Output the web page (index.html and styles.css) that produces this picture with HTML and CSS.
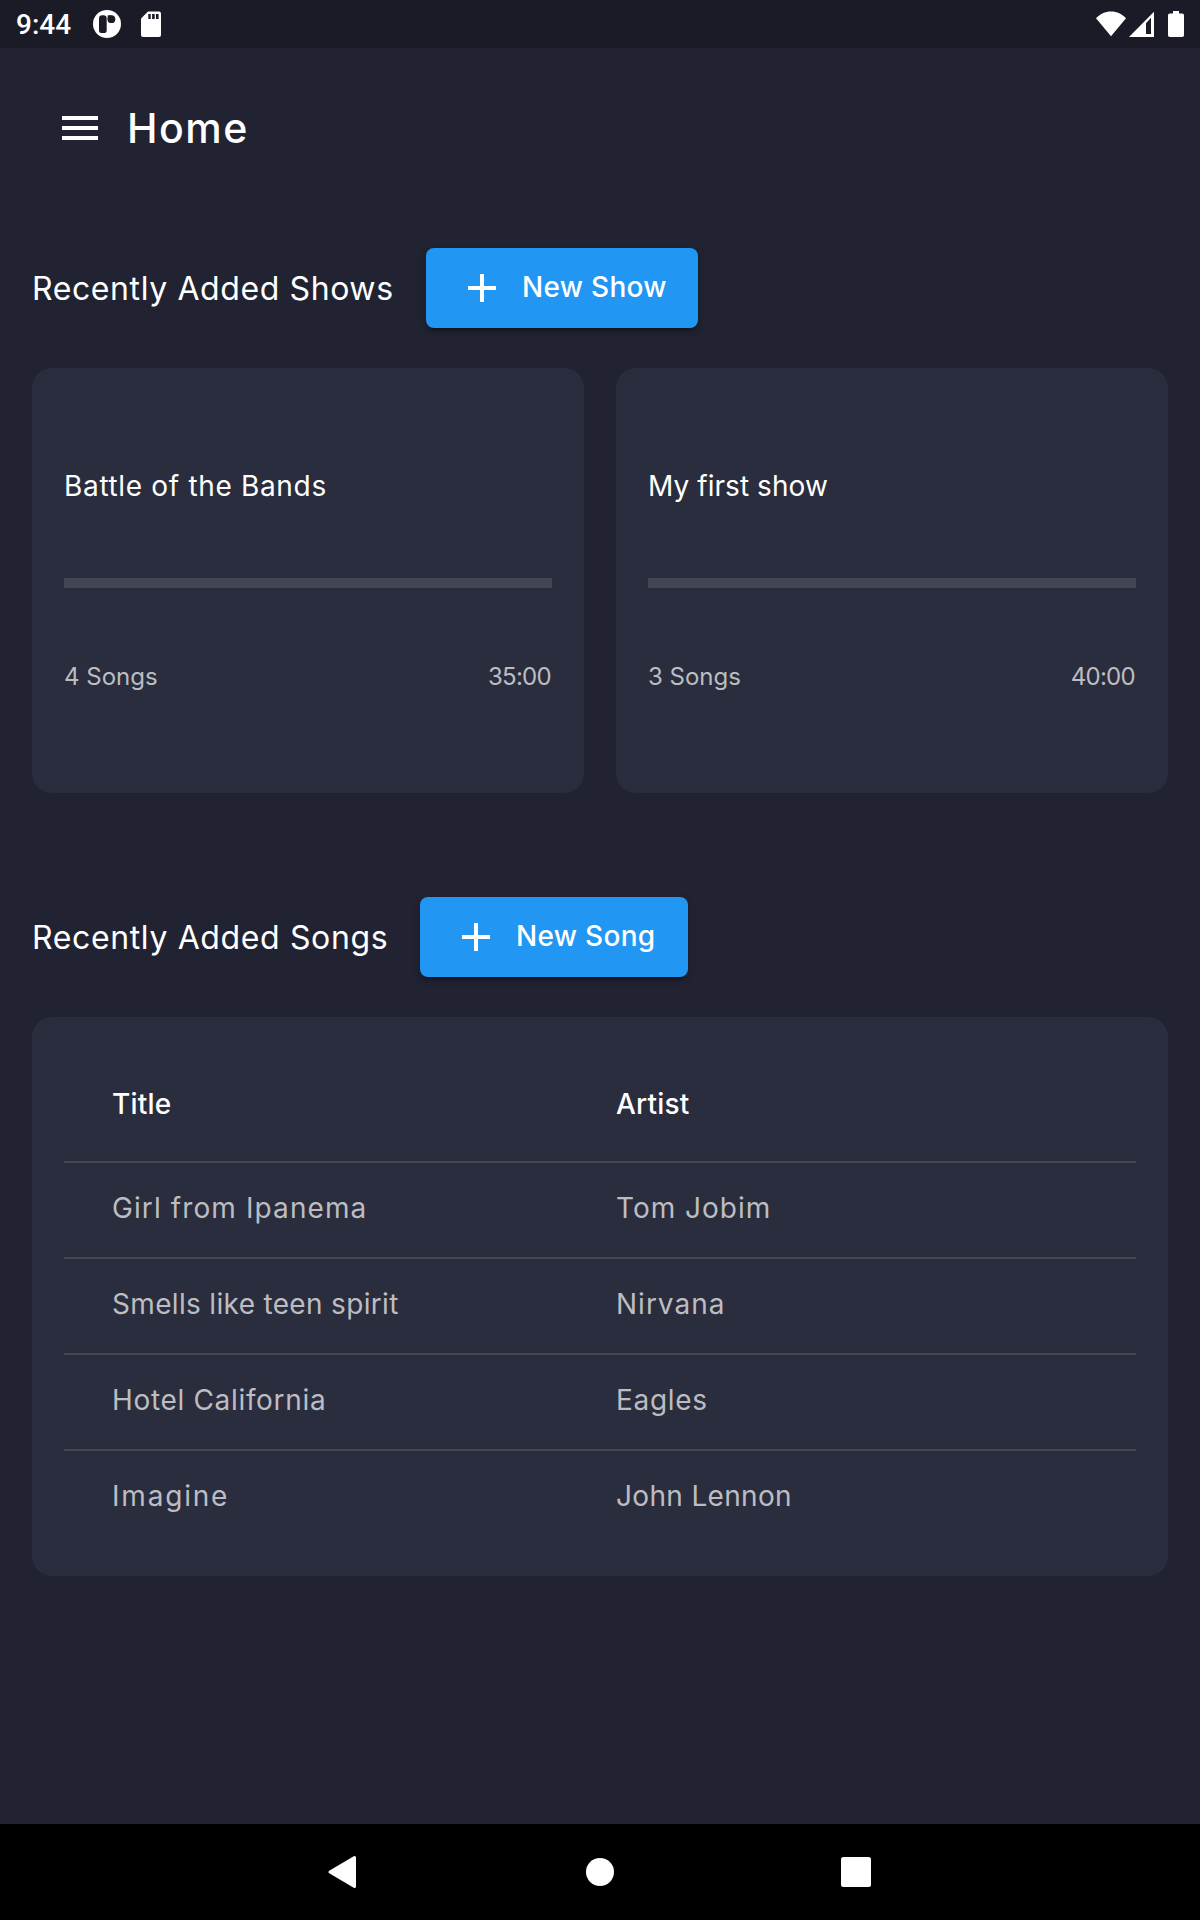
FILE: index.html
```html
<!DOCTYPE html>
<html lang="en">
<head>
<meta charset="utf-8">
<title>Home</title>
<link rel="stylesheet" href="styles.css">
</head>
<body>
<div class="statusbar">
  <span class="clock">9:44</span>
  <svg class="icon-app" width="28" height="28" viewBox="0 0 28 28"><circle cx="14" cy="14" r="14" fill="#fff"/><rect x="6" y="5.3" width="7.7" height="17.8" rx="3.2" fill="#1a1b27"/><circle cx="18.4" cy="9.2" r="3.9" fill="#1a1b27"/><path d="M14.7 5.3h3.7v3.900h-3.700z" fill="#1a1b27"/></svg>
  <svg class="icon-sd" width="20" height="26" viewBox="0 0 20 26"><path d="M7 .5h11a2 2 0 0 1 2 2V24a2 2 0 0 1-2 2H2a2 2 0 0 1-2-2V7.500z" fill="#fff"/><path d="M7.300 3h2.400v5H7.300zM11.100 3h2.600v5h-2.600zM15 3h2.600v5H15z" fill="#1a1b27"/></svg>
  <div class="system">
    <svg width="30" height="26" viewBox="0 0 30 26"><path d="M15 25.300 0 7.200C4 3 9 .5 15 .5S26 3 30 7.200z" fill="#fff"/></svg>
    <svg class="icon-signal" width="25" height="26" viewBox="0 0 25 26"><path fill-rule="evenodd" d="M25 .8V26H0zM22 6.800l-5 5.500V23h5z" fill="#fff"/></svg>
    <svg class="icon-battery" width="16" height="26" viewBox="0 0 16 26"><path d="M5 0h6v2.500h3.200A1.800 1.800 0 0 1 16 4.300V24.200A1.800 1.800 0 0 1 14.200 26H1.800A1.800 1.800 0 0 1 0 24.200V4.300A1.800 1.800 0 0 1 1.800 2.500H5z" fill="#fff"/></svg>
  </div>
</div>

<header class="appbar">
  <svg width="36" height="24" viewBox="0 0 36 24"><path d="M0 0h36v4H0zM0 10h36v4H0zM0 20h36v4H0z" fill="#fff"/></svg>
  <h1 class="page-title">Home</h1>
</header>

<main class="content">
  <section class="section">
    <div class="section-head">
      <h2 class="heading heading-shows">Recently Added Shows</h2>
      <button class="button button-show"><svg width="28" height="28" viewBox="0 0 28 28"><path d="M12 0h4v12h12v4H16v12h-4V16H0v-4h12z" fill="#fff"/></svg><span>New Show</span></button>
    </div>
    <div class="shows">
      <article class="card show">
        <h3 class="show-title title-battle">Battle of the Bands</h3>
        <div class="bar"></div>
        <div class="meta"><span>4 Songs</span><span class="time">35:00</span></div>
      </article>
      <article class="card show">
        <h3 class="show-title title-first">My first show</h3>
        <div class="bar"></div>
        <div class="meta"><span>3 Songs</span><span class="time">40:00</span></div>
      </article>
    </div>
  </section>

  <section class="section">
    <div class="section-head">
      <h2 class="heading heading-songs">Recently Added Songs</h2>
      <button class="button button-song"><svg width="28" height="28" viewBox="0 0 28 28"><path d="M12 0h4v12h12v4H16v12h-4V16H0v-4h12z" fill="#fff"/></svg><span>New Song</span></button>
    </div>
    <div class="card songs">
      <div class="row row-head"><span>Title</span><span>Artist</span></div>
      <div class="row"><span class="track-wider">Girl from Ipanema</span><span class="track-wide">Tom Jobim</span></div>
      <div class="row"><span class="track-tight">Smells like teen spirit</span><span class="track-wide">Nirvana</span></div>
      <div class="row"><span class="track-normal">Hotel California</span><span class="track-normal">Eagles</span></div>
      <div class="row"><span class="track-widest">Imagine</span><span class="track-tight">John Lennon</span></div>
    </div>
  </section>
</main>

<nav class="navbar">
  <svg width="30" height="34" viewBox="0 0 30 34"><path d="M3 17 27.500 2.500V31.500z" fill="#fff" stroke="#fff" stroke-width="3" stroke-linejoin="round"/></svg>
  <svg width="28" height="28" viewBox="0 0 28 28"><circle cx="14" cy="14" r="14" fill="#fff"/></svg>
  <svg width="30" height="30" viewBox="0 0 30 30"><rect width="30" height="30" rx="2.500" fill="#fff"/></svg>
</nav>
</body>
</html>
```
FILE: styles.css
```css
* { box-sizing: border-box; }
body {
  margin: 0;
  height: 1920px;
  display: flex;
  flex-direction: column;
  background: #212332;
  color: #fff;
  font-family: Inter, "Liberation Sans", sans-serif;
  overflow: hidden;
}
svg { display: block; flex: none; }
h1, h2, h3 { margin: 0; font-weight: 400; white-space: nowrap; }

.statusbar {
  height: 48px;
  flex: none;
  display: flex;
  align-items: center;
  padding: 0 16px;
  background: #1a1b27;
}
.clock {
  width: 77px;
  font: 500 28px/48px Roboto, sans-serif;
  padding-top: 2px;
}
.icon-sd { margin-left: 20px; }
.system { margin-left: auto; display: flex; align-items: center; }
.icon-signal { margin-left: 3px; }
.icon-battery { margin-left: 14px; }

.appbar {
  height: 160px;
  flex: none;
  display: flex;
  align-items: center;
  gap: 29px;
  padding-left: 62px;
}
.page-title {
  font-size: 41px;
  line-height: 48px;
  font-weight: 500;
  letter-spacing: 1.500px;
}

.content {
  flex: 1;
  display: flex;
  flex-direction: column;
  gap: 104px;
  padding: 40px 32px 0;
}
.section { display: flex; flex-direction: column; gap: 40px; }
.section-head { display: flex; align-items: center; height: 80px; }
.heading { font-size: 32px; line-height: 40px; padding-top: 2px; }
.heading-shows { width: 394px; letter-spacing: .6px; }
.heading-songs { width: 388px; letter-spacing: .63px; }
.button {
  height: 80px;
  display: flex;
  align-items: center;
  gap: 26px;
  padding: 0 0 0 42px;
  border: 0;
  border-radius: 8px;
  background: #2196f3;
  color: #fff;
  font: 500 28px/36px Inter, sans-serif;
  letter-spacing: .3px;
  white-space: nowrap;
  box-shadow: 0 6px 2px -4px rgba(0,0,0,.2), 0 4px 4px rgba(0,0,0,.14), 0 2px 10px rgba(0,0,0,.12);
}
.button span { padding-bottom: 2px; }
.button-show { width: 272px; }
.button-song { width: 268px; }

.card { background: #2a2d3e; border-radius: 20px; }
.shows { display: grid; grid-template-columns: 1fr 1fr; gap: 32px; }
.show {
  height: 425px;
  padding: 98px 32px 0;
  display: flex;
  flex-direction: column;
}
.show-title { font-size: 28px; line-height: 40px; }
.title-battle { letter-spacing: .67px; }
.title-first { letter-spacing: .06px; }
.bar { height: 10px; margin-top: 72px; background: #444655; }
.meta {
  display: flex;
  justify-content: space-between;
  margin-top: 71px;
  font-size: 24px;
  line-height: 36px;
  color: #bdbdc1;
}
.time { letter-spacing: -.7px; padding-right: 1px; }

.songs { height: 559px; padding: 31px 32px 0; }
.row {
  height: 96px;
  display: grid;
  grid-template-columns: 504px 1fr;
  align-items: center;
  padding: 0 0 4px 48px;
  border-top: 2px solid #444655;
  font-size: 28px;
  line-height: 40px;
  color: #bdbdc1;
}
.row-head {
  height: 113px;
  padding-bottom: 1px;
  border-top: 0;
  color: #fff;
  font-weight: 500;
  letter-spacing: .2px;
}
.track-tight { letter-spacing: .33px; }
.track-normal { letter-spacing: .67px; }
.track-wide { letter-spacing: 1px; }
.track-wider { letter-spacing: 1.100px; }
.track-widest { letter-spacing: 1.800px; }

.navbar {
  height: 96px;
  flex: none;
  display: flex;
  align-items: center;
  justify-content: space-between;
  padding: 0 329px 0 327px;
  background: #000;
}
.navbar svg:nth-child(2) { margin-left: 2px; }
```
